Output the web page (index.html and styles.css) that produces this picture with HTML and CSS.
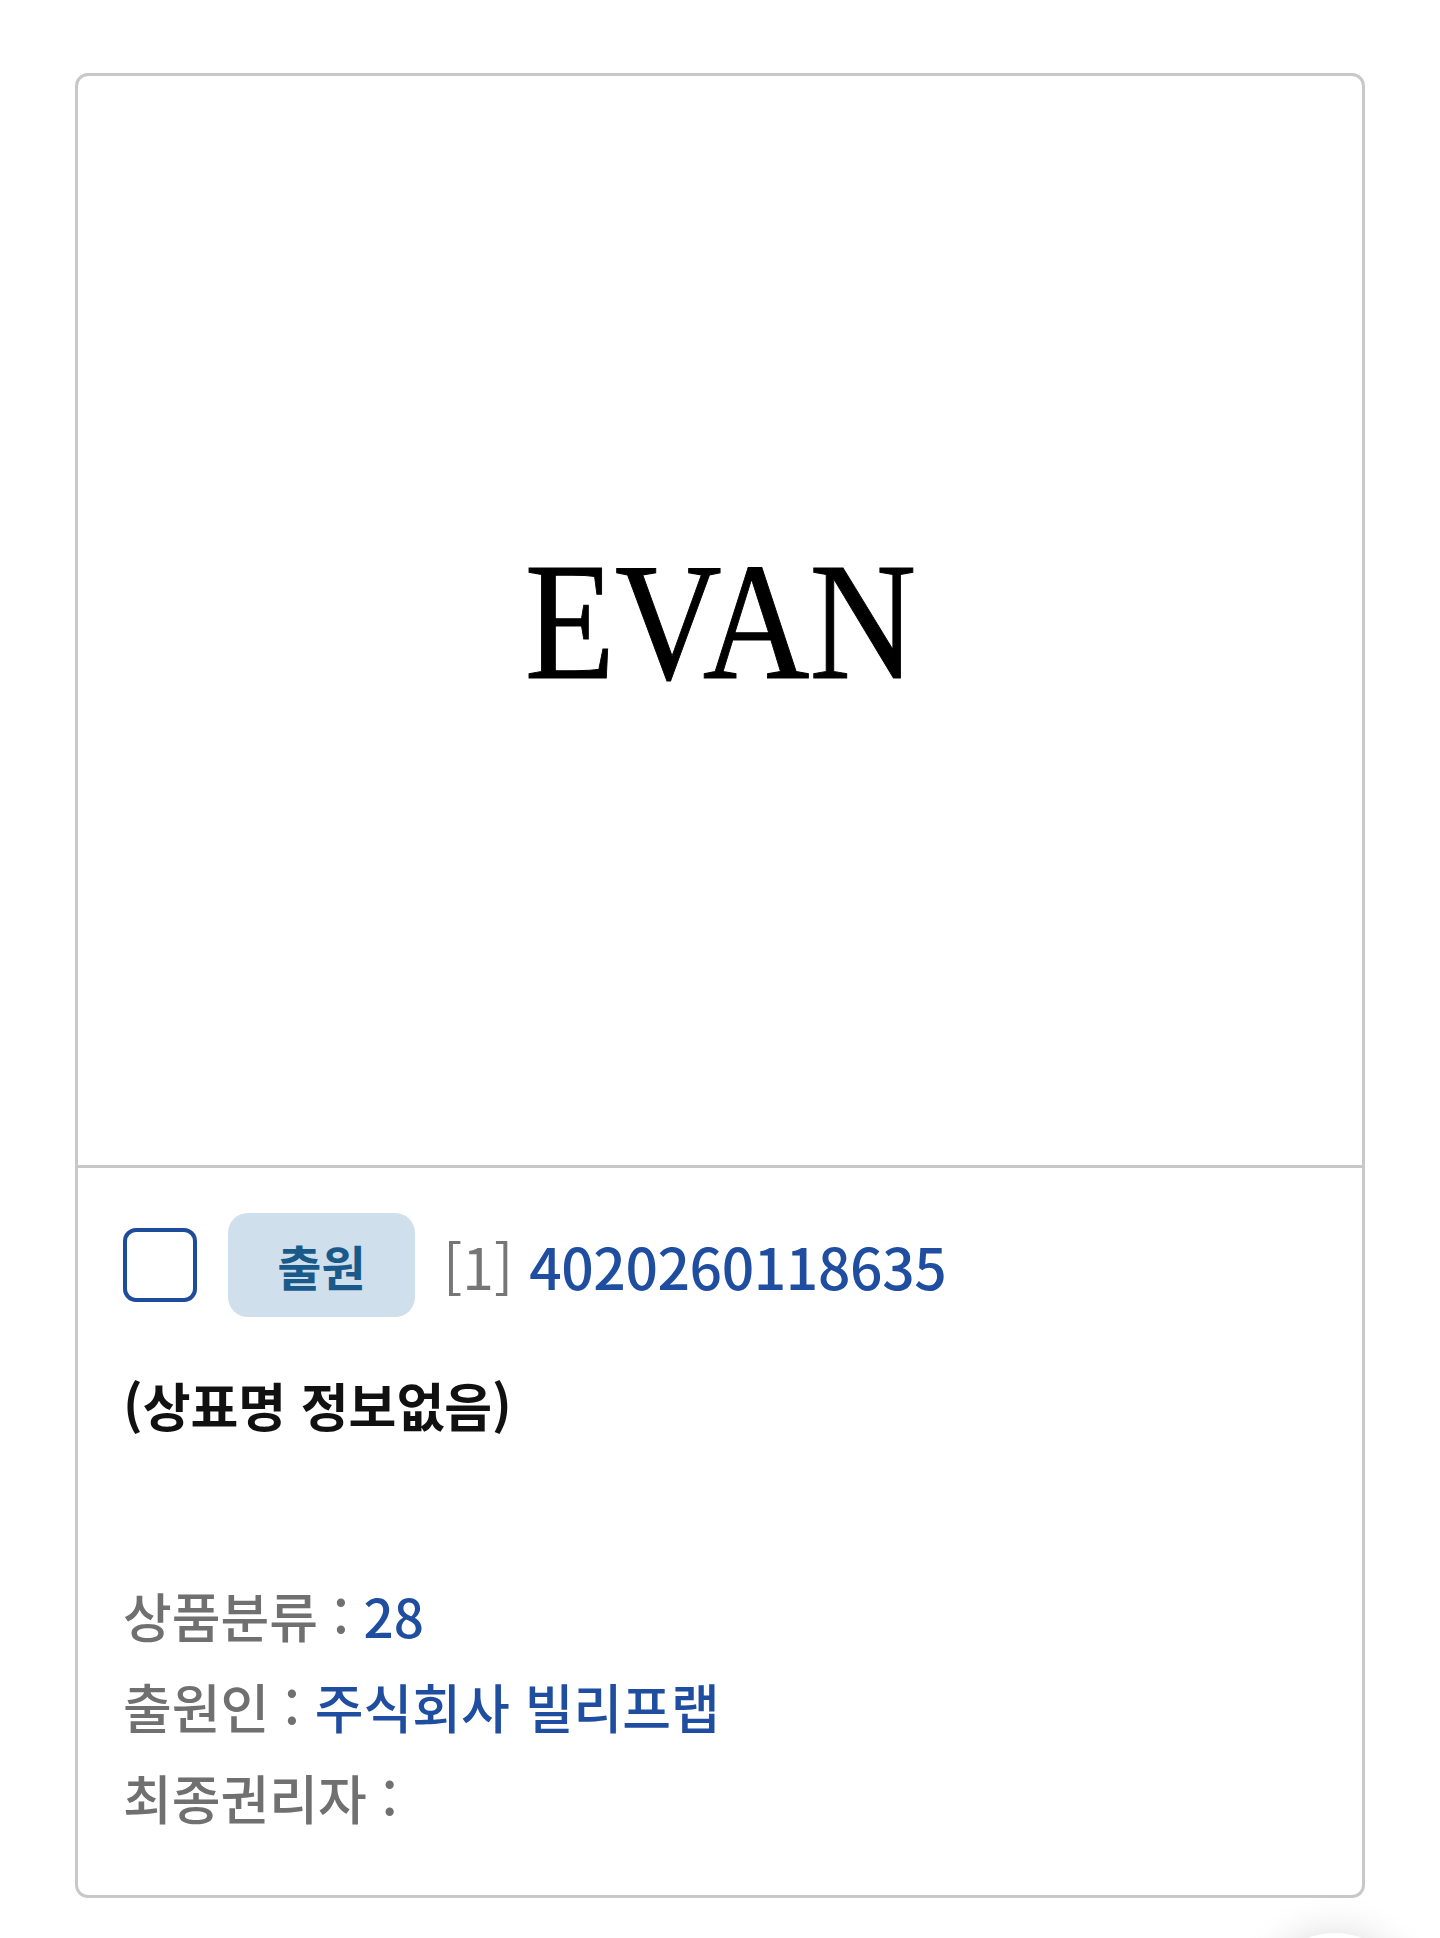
FILE: index.html
```html
<!DOCTYPE html>
<html lang="ko">
<head>
<meta charset="utf-8">
<title>상표 검색 결과</title>
<link rel="stylesheet" href="styles.css">
</head>
<body>
<main class="page">
  <article class="card">
    <div class="thumb">
      <span class="mark">EVAN</span>
    </div>
    <div class="info">
      <div class="head">
        <span class="check" role="checkbox" aria-checked="false"></span>
        <span class="badge">출원</span>
        <span class="num"><span class="idx">[1]</span> <a class="appno" href="#">4020260118635</a></span>
      </div>
      <h2 class="title">(상표명 정보없음)</h2>
      <ul class="meta">
        <li><span class="label">상품분류 : </span><span class="val">28</span></li>
        <li><span class="label">출원인 : </span><span class="val">주식회사 빌리프랩</span></li>
        <li><span class="label">최종권리자 : </span></li>
      </ul>
    </div>
  </article>
</main>
<div class="fab"></div>
</body>
</html>
```

FILE: styles.css
```css
html, body {
  margin: 0;
  padding: 0;
  background: #ffffff;
}

body {
  font-family: "Noto Sans CJK KR", "Noto Sans", sans-serif;
  color: #111111;
}

.page {
  padding: 73px 75px 40px;
}

.card {
  border: 3px solid #c8c8c8;
  border-radius: 13px;
  overflow: hidden;
  background: #ffffff;
}

.thumb {
  height: 1089px;
  display: flex;
  align-items: center;
  justify-content: center;
  border-bottom: 3px solid #c8c8c8;
}

.mark {
  display: inline-block;
  font-family: "Liberation Serif", "Times New Roman", serif;
  font-size: 168px;
  line-height: 1;
  color: #000000;
  transform: scaleX(0.88);
  -webkit-text-stroke: 1px #000000;
}

.info {
  padding: 45px 45px 52px 45px;
}

.head {
  display: flex;
  align-items: center;
  height: 104px;
}

.check {
  box-sizing: border-box;
  width: 74px;
  height: 74px;
  border: 4px solid #1f4c9a;
  border-radius: 13px;
  background: #ffffff;
  flex: none;
}

.badge {
  box-sizing: border-box;
  margin-left: 31px;
  width: 187px;
  height: 104px;
  border-radius: 20px;
  background: #cfdfeb;
  color: #1a5a8a;
  font-size: 48px;
  font-weight: 700;
  display: flex;
  align-items: center;
  justify-content: center;
  flex: none;
}

.num {
  margin-left: 28px;
  font-size: 57px;
  font-weight: 500;
  line-height: 1;
  white-space: nowrap;
}

.idx {
  color: #767676;
  font-weight: 400;
}

.appno {
  color: #1f4ea0;
  text-decoration: none;
  letter-spacing: -0.4px;
}

.title {
  margin: 53px 0 0;
  min-height: 138px;
  font-size: 52px;
  line-height: 70px;
  font-weight: 700;
  color: #111111;
}

.meta {
  list-style: none;
  margin: 62px 0 0;
  padding: 0;
  font-size: 53px;
  line-height: 91px;
  font-weight: 500;
}

.label {
  color: #707070;
}

.val {
  color: #1f4ea0;
}

.fab {
  position: fixed;
  right: 30px;
  bottom: -145px;
  width: 150px;
  height: 150px;
  border-radius: 50%;
  background: #ffffff;
  box-shadow: 0 0 40px rgba(0, 0, 0, 0.14);
}
```
